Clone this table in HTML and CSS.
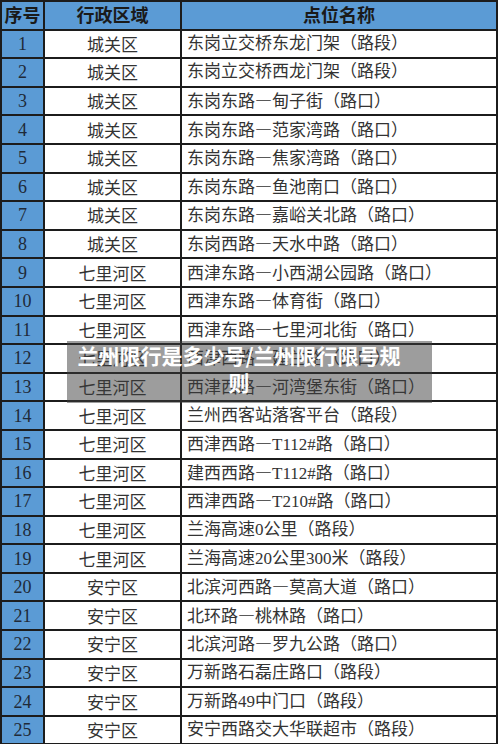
FILE: index.html
```html
<!DOCTYPE html>
<html lang="zh">
<head>
<meta charset="utf-8">
<link rel="stylesheet" href="styles.css">
</head>
<body>
<div class="page">
<table class="grid">
<colgroup><col class="c-no"><col class="c-area"><col class="c-place"></colgroup>
<thead>
<tr><th class="no">序号</th><th>行政区域</th><th>点位名称</th></tr>
</thead>
<tbody>
<tr><td class="no">1</td><td class="area">城关区</td><td class="place">东岗立交桥东龙门架（路段）</td></tr>
<tr><td class="no">2</td><td class="area">城关区</td><td class="place">东岗立交桥西龙门架（路段）</td></tr>
<tr><td class="no">3</td><td class="area">城关区</td><td class="place">东岗东路<span class="dash">—</span>甸子街（路口）</td></tr>
<tr><td class="no">4</td><td class="area">城关区</td><td class="place">东岗东路<span class="dash">—</span>范家湾路（路口）</td></tr>
<tr><td class="no">5</td><td class="area">城关区</td><td class="place">东岗东路<span class="dash">—</span>焦家湾路（路口）</td></tr>
<tr><td class="no">6</td><td class="area">城关区</td><td class="place">东岗东路<span class="dash">—</span>鱼池南口（路口）</td></tr>
<tr><td class="no">7</td><td class="area">城关区</td><td class="place">东岗东路<span class="dash">—</span>嘉峪关北路（路口）</td></tr>
<tr><td class="no">8</td><td class="area">城关区</td><td class="place">东岗西路<span class="dash">—</span>天水中路（路口）</td></tr>
<tr><td class="no">9</td><td class="area">七里河区</td><td class="place">西津东路<span class="dash">—</span>小西湖公园路（路口）</td></tr>
<tr><td class="no">10</td><td class="area">七里河区</td><td class="place">西津东路<span class="dash">—</span>体育街（路口）</td></tr>
<tr><td class="no">11</td><td class="area">七里河区</td><td class="place">西津东路<span class="dash">—</span>七里河北街（路口）</td></tr>
<tr><td class="no">12</td><td class="area">七里河区</td><td class="place">西津西路<span class="dash">—</span>建兰路（路口）</td></tr>
<tr><td class="no">13</td><td class="area">七里河区</td><td class="place">西津西路<span class="dash">—</span>河湾堡东街（路口）</td></tr>
<tr><td class="no">14</td><td class="area">七里河区</td><td class="place">兰州西客站落客平台（路段）</td></tr>
<tr><td class="no">15</td><td class="area">七里河区</td><td class="place">西津西路<span class="dash">—</span>T112#路（路口）</td></tr>
<tr><td class="no">16</td><td class="area">七里河区</td><td class="place">建西西路<span class="dash">—</span>T112#路（路口）</td></tr>
<tr><td class="no">17</td><td class="area">七里河区</td><td class="place">西津西路<span class="dash">—</span>T210#路（路口）</td></tr>
<tr><td class="no">18</td><td class="area">七里河区</td><td class="place">兰海高速0公里（路段）</td></tr>
<tr><td class="no">19</td><td class="area">七里河区</td><td class="place">兰海高速20公里300米（路段）</td></tr>
<tr><td class="no">20</td><td class="area">安宁区</td><td class="place">北滨河西路<span class="dash">—</span>莫高大道（路口）</td></tr>
<tr><td class="no">21</td><td class="area">安宁区</td><td class="place">北环路<span class="dash">—</span>桃林路（路口）</td></tr>
<tr><td class="no">22</td><td class="area">安宁区</td><td class="place">北滨河路<span class="dash">—</span>罗九公路（路口）</td></tr>
<tr><td class="no">23</td><td class="area">安宁区</td><td class="place">万新路石磊庄路口（路段）</td></tr>
<tr><td class="no">24</td><td class="area">安宁区</td><td class="place">万新路49中门口（路段）</td></tr>
<tr><td class="no">25</td><td class="area">安宁区</td><td class="place">安宁西路交大华联超市（路段）</td></tr>
</tbody>
</table>
<div class="banner">兰州限行是多少号/兰州限行限号规则</div>
</div>
</body>
</html>
```
FILE: styles.css
```css
html, body {
  margin: 0;
  padding: 0;
  background: #ffffff;
}
.page {
  position: relative;
  width: 500px;
  height: 744px;
  overflow: hidden;
}
.grid {
  width: 498px;
  border-collapse: collapse;
  table-layout: fixed;
  font-family: "Liberation Serif", "Noto Sans CJK SC", serif;
  color: #333333;
}
.grid tr {
  height: 28.6px;
}
.c-no { width: 43px; }
.c-area { width: 137px; }
.grid th, .grid td {
  border: 2px solid #1c1c1c;
  padding: 0;
  line-height: 18px;
  white-space: nowrap;
  overflow: hidden;
}
.grid th {
  background: #5b9bd5;
  color: #1a1a1a;
  font-family: "Noto Sans CJK SC", sans-serif;
  font-weight: 700;
  font-size: 18px;
  text-align: center;
  padding-bottom: 3px;
}
.grid td.no {
  background: #5b9bd5;
  color: #1f2a38;
  text-align: center;
  font-size: 18px;
}
.grid td.area {
  text-align: center;
  font-family: "Noto Sans CJK SC", sans-serif;
  font-weight: 400;
  font-size: 17px;
}
.grid td.place {
  text-align: left;
  padding-left: 5px;
  font-family: "Liberation Serif", "Noto Sans CJK SC", serif;
  font-weight: 400;
  font-size: 17px;
}
.dash {
  font-family: "Noto Sans CJK SC", sans-serif;
}
.banner {
  position: absolute;
  left: 67px;
  top: 341px;
  width: 324px;
  height: 61px;
  padding: 1px 31px 0 10px;
  box-sizing: content-box;
  background: rgba(60, 60, 60, 0.5);
  color: #ffffff;
  font-family: "Noto Sans CJK SC", sans-serif;
  font-weight: 700;
  font-size: 21px;
  line-height: 27px;
  text-align: center;
}
```
